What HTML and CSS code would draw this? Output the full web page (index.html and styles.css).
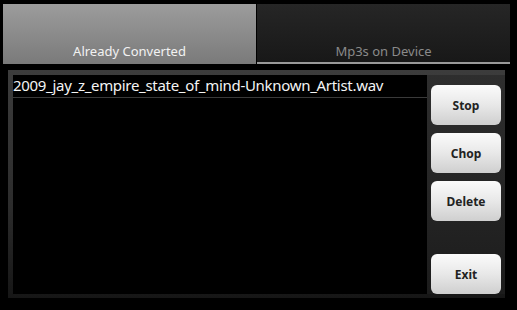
FILE: index.html
```html
<!DOCTYPE html>
<html>
<head>
<meta charset="utf-8">
<link rel="stylesheet" href="styles.css">
</head>
<body>
<div class="screen">
  <div class="tabs">
    <div class="tab tab-active">Already Converted</div>
    <div class="tab tab-inactive">Mp3s on Device</div>
  </div>
  <div class="frame">
    <div class="list">
      <div class="row">2009_jay_z_empire_state_of_mind-Unknown_Artist.wav</div>
    </div>
    <div class="side">
      <button class="btn">Stop</button>
      <button class="btn">Chop</button>
      <button class="btn">Delete</button>
      <button class="btn btn-exit">Exit</button>
    </div>
  </div>
</div>
</body>
</html>
```

FILE: styles.css
```css
html, body {
  margin: 0;
  padding: 0;
  background: #000;
}
.screen {
  width: 517px;
  height: 310px;
  background: #000;
  font-family: "Noto Sans", "Open Sans", sans-serif;
  overflow: hidden;
}
.tabs {
  display: flex;
  gap: 1px;
  padding: 4px 7px 0 3px;
  height: 60px;
}
.tab {
  flex: 1;
  display: flex;
  align-items: flex-end;
  justify-content: center;
  font-size: 13px;
  padding-bottom: 4px;
  box-sizing: border-box;
}
.tab-active {
  background: linear-gradient(#9c9c9c, #7a7a7a);
  color: #f2f2f2;
}
.tab-inactive {
  background: linear-gradient(#262626, #181818);
  color: #8a8a8a;
  border-bottom: 2px solid #9a9a9a;
  padding-bottom: 2px;
}
.frame {
  margin: 6px 0 0 8px;
  width: 497px;
  height: 228px;
  display: flex;
  box-sizing: border-box;
  padding: 5px 0 4px 5px;
  background: linear-gradient(#3c3c3c, #2c2c2c 60%, #161616);
}
.list {
  flex: 1;
  background: #000;
}
.row {
  color: #f4f4f4;
  font-size: 15px;
  height: 22px;
  line-height: 21px;
  border-bottom: 1px solid #3a3a3a;
  white-space: nowrap;
  letter-spacing: -0.3px;
}
.side {
  width: 78px;
  box-sizing: border-box;
  background: linear-gradient(#2e2e2e, #242424 60%, #1c1c1c);
  display: flex;
  flex-direction: column;
  padding: 10px 4px 0 4px;
  gap: 8px;
}
.btn {
  height: 40px;
  width: 70px;
  border: none;
  border-radius: 6px;
  background: linear-gradient(#fbfbfb, #e8e8e8 50%, #cfcfcf);
  color: #222;
  font-family: "Noto Sans", "Open Sans", sans-serif;
  font-weight: bold;
  font-size: 12px;
  padding: 0;
}
.btn-exit {
  margin-top: auto;
}
```
